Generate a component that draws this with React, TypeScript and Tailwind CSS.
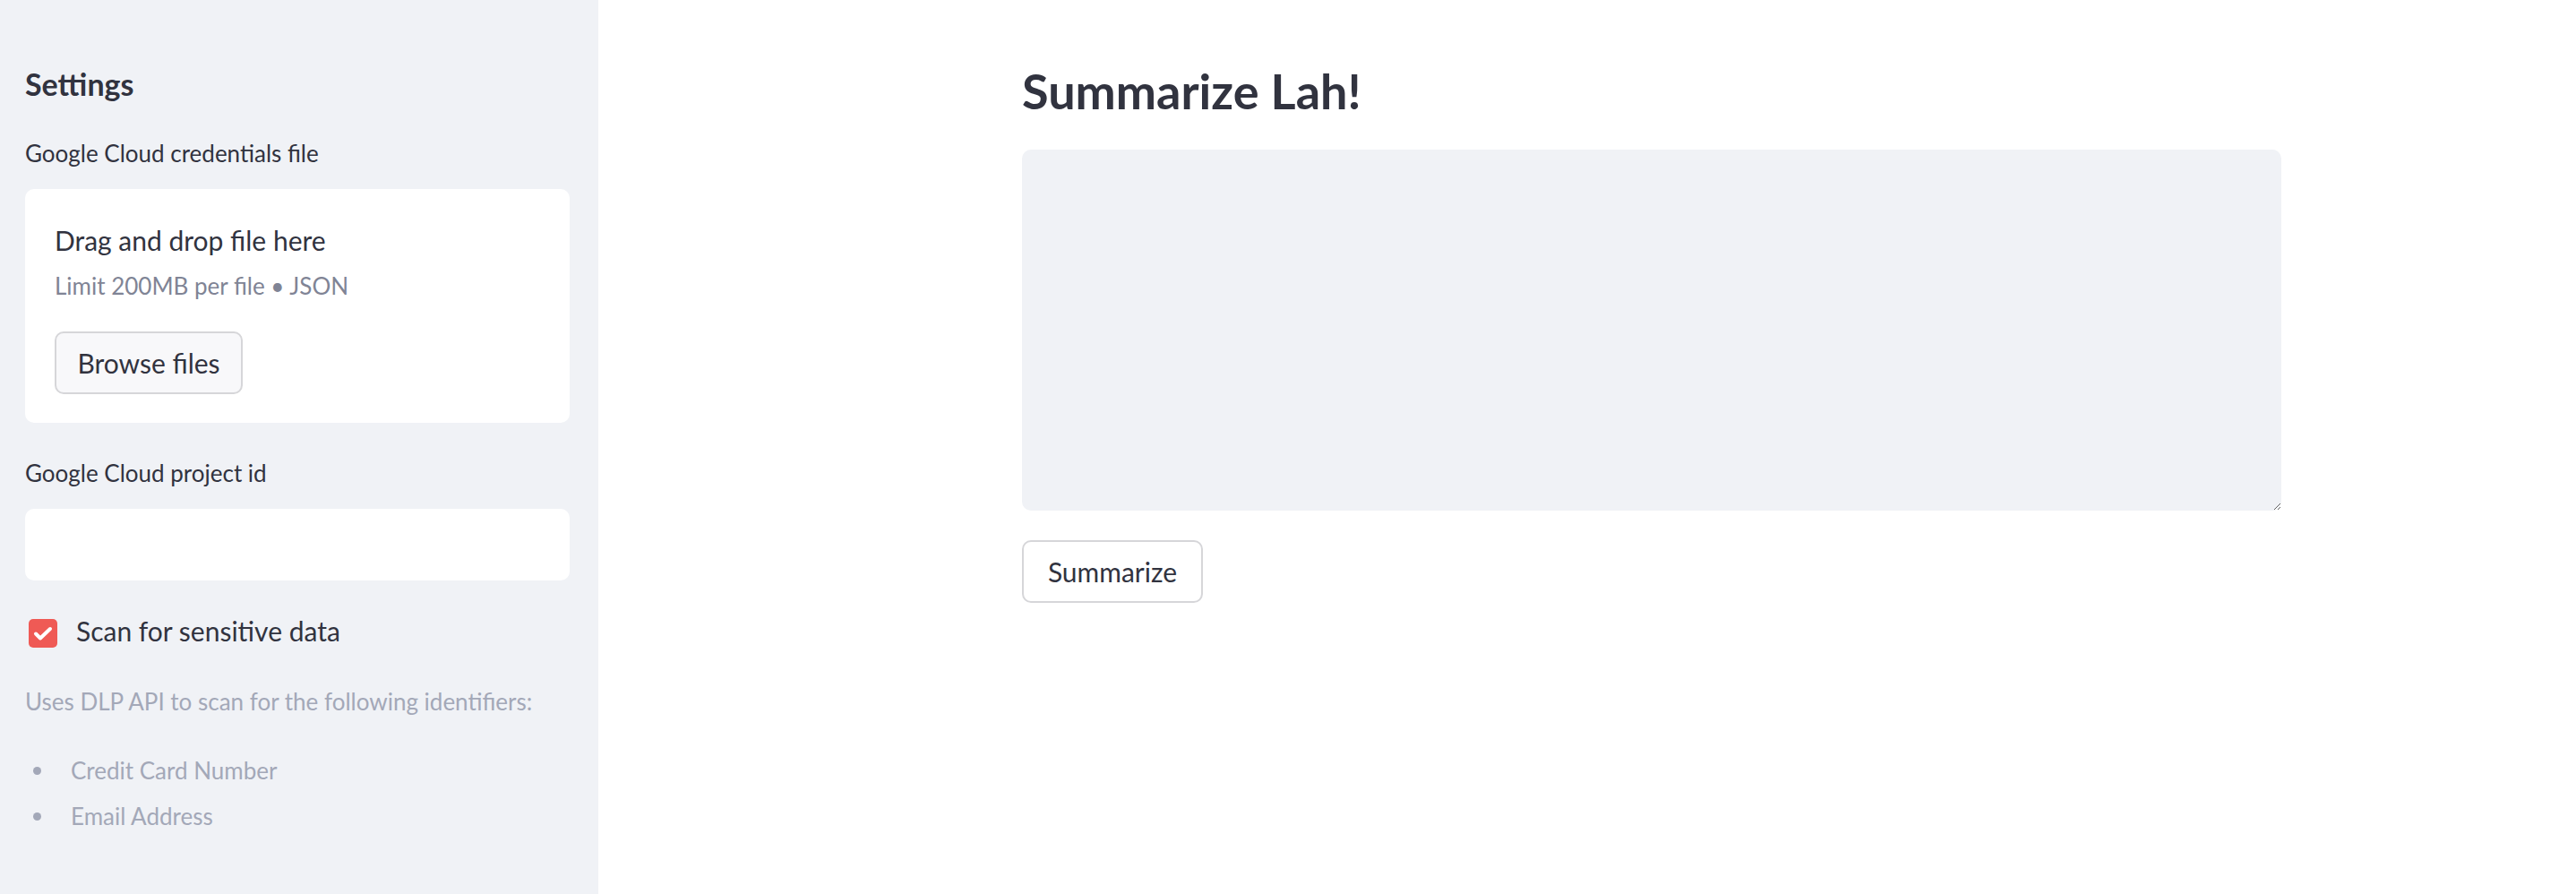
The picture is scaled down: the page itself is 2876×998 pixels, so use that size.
import React from "react";

const Sidebar: React.FC = () => {
  return (
    <aside className="w-[668px] shrink-0 bg-[#f0f2f6] pl-[28px] pr-[32px] pt-[70px] text-[#31333f]">
      <h2 className="text-[34px] leading-[48px] font-bold">Settings</h2>

      <p className="mt-[33px] text-[26px] leading-[40px]">
        Google Cloud credentials file
      </p>
      <div className="mt-[20px] h-[261px] rounded-[10px] bg-white pl-[33px] pt-[37px]">
        <p className="text-[30px] leading-[40px]">Drag and drop file here</p>
        <p className="mt-[13px] text-[26px] leading-[36px] text-[#808495]">
          Limit 200MB per file • JSON
        </p>
        <button className="mt-[33px] flex h-[70px] w-[210px] items-center justify-center rounded-[10px] border-2 border-[#d6d6d9] bg-[#f8f8fa] text-[30px]">
          Browse files
        </button>
      </div>

      <p className="mt-[36px] text-[26px] leading-[40px]">
        Google Cloud project id
      </p>
      <input
        type="text"
        className="mt-[20px] block h-[80px] w-full rounded-[10px] bg-white px-4 text-[30px] outline-none"
      />

      <label className="mt-[43px] flex items-start gap-[21px] pl-[4px]">
        <span className="flex h-[32px] w-[32px] items-center justify-center rounded-[5px] bg-[#ef5a55]">
          <svg width="32" height="32" viewBox="0 0 32 32" fill="none">
            <path
              d="M8 16.5l5 5L24 11"
              stroke="white"
              strokeWidth="4"
              strokeLinecap="round"
              strokeLinejoin="round"
            />
          </svg>
        </span>
        <span className="text-[30px] leading-[26px]">
          Scan for sensitive data
        </span>
      </label>

      <p className="mt-[40px] text-[26px] leading-[40px] text-[#a3a8b8]">
        Uses DLP API to scan for the following identifiers:
      </p>
      <ul className="mt-[32px] text-[26px] leading-[51px] text-[#a3a8b8]">
        {["Credit Card Number", "Email Address"].map((item) => (
          <li key={item} className="flex items-center">
            <span className="ml-[9px] h-[9px] w-[9px] rounded-full bg-[#a3a8b8]" />
            <span className="ml-[33px]">{item}</span>
          </li>
        ))}
      </ul>
    </aside>
  );
};

const App: React.FC = () => {
  return (
    <div className="flex min-h-[998px] w-full bg-white font-[family-name:Lato,sans-serif]">
      <Sidebar />
      <main className="flex-1 pl-[473px] pt-[66px] text-[#31333f]">
        <div className="w-[1406px]">
          <h1 className="text-[54px] leading-[72px] font-bold">
            Summarize Lah!
          </h1>
          <textarea className="mt-[29px] block h-[403px] w-full resize-y rounded-[10px] bg-[#f0f2f6] p-4 text-[30px] outline-none" />
          <button className="mt-[33px] flex h-[70px] w-[202px] items-center justify-center rounded-[10px] border-2 border-[#d6d6d9] bg-white text-[30px]">
            Summarize
          </button>
        </div>
      </main>
    </div>
  );
};

export default App;
